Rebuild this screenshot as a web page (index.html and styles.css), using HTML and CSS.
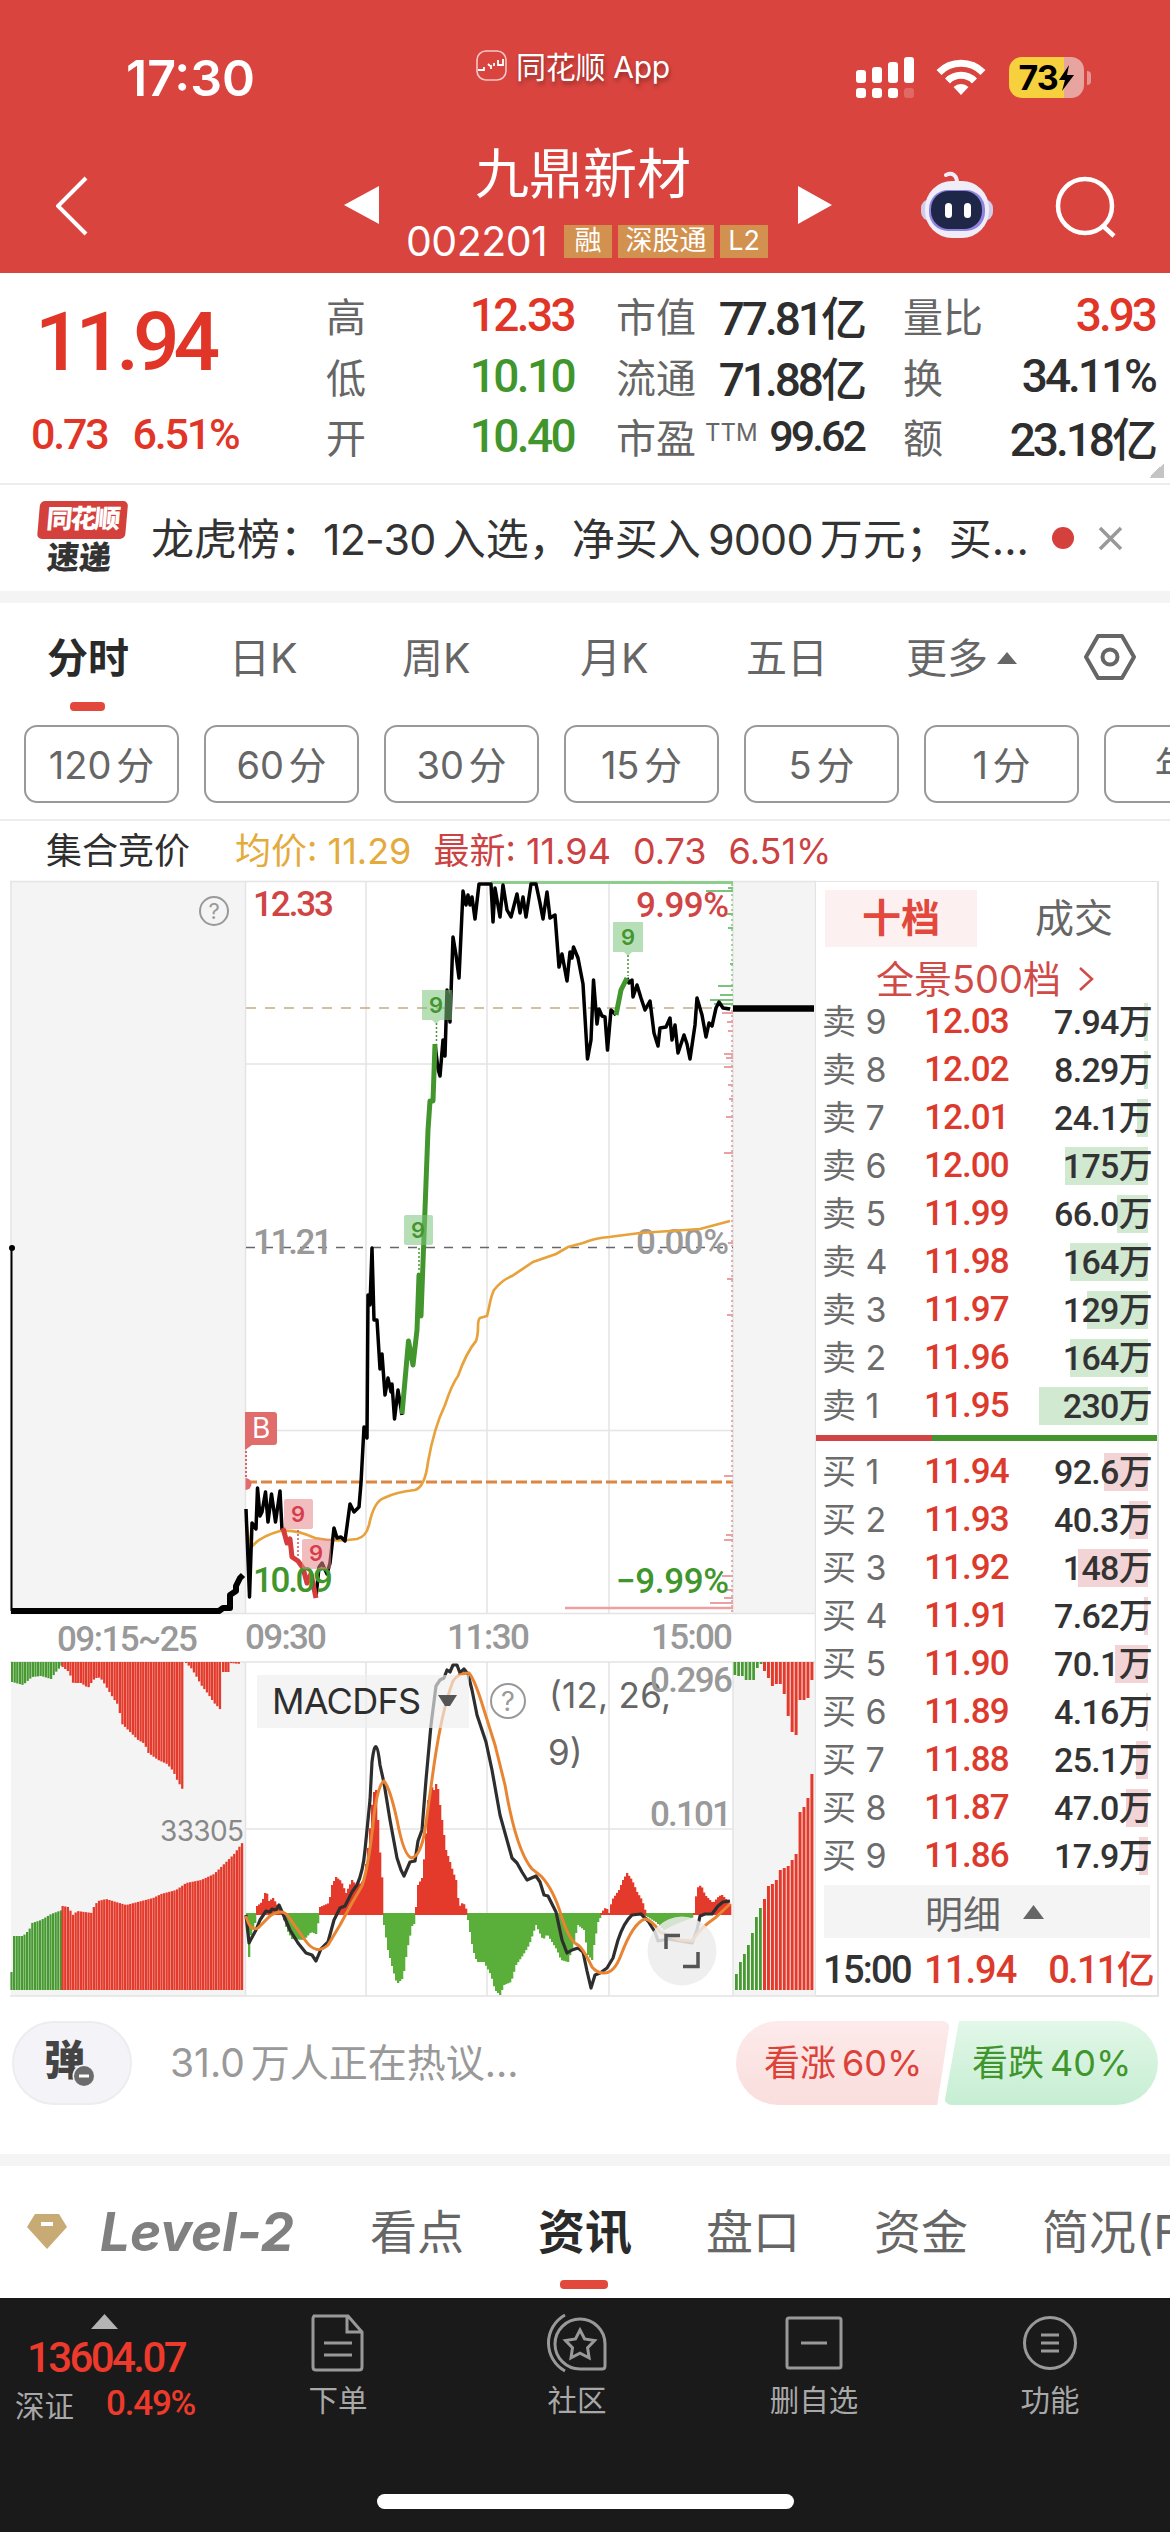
FILE: index.html
```html
<!DOCTYPE html>
<html lang="zh-CN">
  <head>
    <meta charset="utf-8" />
    <title>九鼎新材 002201</title>
    <link rel="stylesheet" href="styles.css">
  </head>
  <body>
    <div class="header">
      <div class="status">
        <div class="time">17:30</div>
        <div class="app-label">
          <svg width="31" height="31" viewBox="0 0 31 31" fill="none" stroke="#fff">
            <rect x="1" y="1" width="29" height="29" rx="9" stroke-width="1.6" opacity=".7" />
            <path d="M2 20h6v-3M12 14l2 2M15 19v-4M18 13v3M22 10v5h5V9" stroke-width="1.8" />
          </svg>
          <span>同花顺 App</span>
        </div>
        <svg class="signal" width="58" height="42" viewBox="0 0 58 42" fill="#fff">
          <rect x="0" y="13" width="10" height="13" rx="3" />
          <rect x="16" y="10" width="10" height="16" rx="3" />
          <rect x="32" y="5" width="10" height="21" rx="3" />
          <rect x="48" y="0" width="10" height="26" rx="3" />
          <rect x="0" y="31" width="10" height="10" rx="3" />
          <rect x="16" y="31" width="10" height="10" rx="3" />
          <rect x="32" y="31" width="10" height="10" rx="3" />
          <rect x="48" y="31" width="10" height="10" rx="3" opacity=".2" />
        </svg>
        <svg class="wifi" width="50" height="38" viewBox="0 0 50 38" fill="none" stroke="#fff" stroke-width="7">
          <path d="M3 14.500a31 31 0 0 1 44 0" />
          <path d="M11.500 23a19 19 0 0 1 27 0" />
          <path d="M25 37l-7.500-8a11 11 0 0 1 15 0z" fill="#fff" stroke="none" />
        </svg>
        <div class="battery">
          <div class="battery-body">73<svg width="17" height="28" viewBox="0 0 17 28"><path d="M11 1L1 16h6l-3 11L16 11h-7z" fill="#000" /></svg></div>
          <div class="battery-tip"></div>
        </div>
      </div>

      <div class="nav">
        <svg class="back" width="32" height="60" viewBox="0 0 32 60"><path d="M30 2L2 30l28 28" fill="none" stroke="#fff" stroke-width="4" /></svg>
        <svg class="prev" width="35" height="38" viewBox="0 0 35 38"><path d="M0 19L35 0v38z" fill="#fff" /></svg>
        <div class="stock">
          <div class="stock-name">九鼎新材</div>
          <div class="stock-code">
            <span class="code">002201</span>
            <span class="badge">融</span>
            <span class="badge wide">深股通</span>
            <span class="badge">L2</span>
          </div>
        </div>
        <svg class="next" width="34" height="38" viewBox="0 0 34 38"><path d="M34 19L0 0v38z" fill="#fff" /></svg>
        <svg class="robot" width="72" height="68" viewBox="0 0 72 68">
          <path d="M25 4c6-3 11 0 11 8" fill="none" stroke="#f0edf8" stroke-width="4" stroke-linecap="round" />
          <rect x="0" y="28" width="72" height="22" rx="9" fill="#cfcbe8" />
          <rect x="4" y="10" width="64" height="57" rx="27" fill="#eeedf8" />
          <rect x="8" y="19" width="56" height="41" rx="19" fill="#8f83e0" />
          <rect x="10" y="20" width="51" height="38" rx="18" fill="#1e2748" />
          <rect x="24" y="32" width="7" height="15" rx="3.500" fill="#fff" />
          <rect x="43" y="32" width="7" height="15" rx="3.500" fill="#fff" />
        </svg>
        <svg class="search" width="62" height="62" viewBox="0 0 62 62" fill="none" stroke="#fff" stroke-width="4.500">
          <circle cx="30" cy="30" r="27" />
          <path d="M47 49l12 11" />
        </svg>
      </div>
    </div>

    <div class="quote">
      <div class="price-box">
        <div class="price num">11.94</div>
        <div class="change num"><span>0.73</span><span>6.51%</span></div>
      </div>
      <div class="stats col-a">
        <div><span>高</span><b class="num red">12.33</b></div>
        <div><span>低</span><b class="num green">10.10</b></div>
        <div><span>开</span><b class="num green">10.40</b></div>
      </div>
      <div class="stats col-b">
        <div><span>市值</span><b class="num">77.81亿</b></div>
        <div><span>流通</span><b class="num">71.88亿</b></div>
        <div><span>市盈<sup>TTM</sup></span><b class="num small">99.62</b></div>
      </div>
      <div class="stats col-c">
        <div><span>量比</span><b class="num red">3.93</b></div>
        <div><span>换</span><b class="num">34.11%</b></div>
        <div><span>额</span><b class="num">23.18亿</b></div>
      </div>
      <div class="corner"></div>
    </div>

    <div class="news">
      <div class="news-logo">
        <div class="news-logo-top">同花顺</div>
        <div class="news-logo-bottom">速递</div>
      </div>
      <div class="news-text">龙虎榜：<i>12-30</i> 入选，净买入 <i>9000</i> 万元；买...</div>
      <div class="news-dot"></div>
      <svg width="25" height="25" viewBox="0 0 25 25"><path d="M2 2l21 21M23 2L2 23" stroke="#999" stroke-width="3.500" /></svg>
    </div>

    <div class="tabs">
      <div class="tab active">分时</div>
      <div class="tab">日K</div>
      <div class="tab">周K</div>
      <div class="tab">月K</div>
      <div class="tab">五日</div>
      <div class="tab more">更多<svg width="20" height="12" viewBox="0 0 20 12"><path d="M10 0l10 12H0z" fill="#666" /></svg></div>
      <svg class="gear" width="52" height="46" viewBox="0 0 52 46" fill="none" stroke="#666" stroke-width="4">
        <path d="M14 2h24l12 21-12 21H14L2 23z" stroke-linejoin="round" />
        <circle cx="26" cy="23" r="7.500" />
      </svg>
    </div>

    <div class="periods">
      <div class="period">120 分</div>
      <div class="period">60 分</div>
      <div class="period">30 分</div>
      <div class="period">15 分</div>
      <div class="period">5 分</div>
      <div class="period">1 分</div>
      <div class="period">年K</div>
    </div>

    <div class="summary">
      <span class="auction">集合竞价</span>
      <span class="avg">均价: 11.29</span>
      <span class="last">最新: 11.94</span>
      <span class="last">0.73</span>
      <span class="last">6.51%</span>
    </div>

    <div class="main">
      <svg class="chart" width="816" height="1120" viewBox="0 880 816 1120">
        <!-- panels and grid -->
        <g fill="#f4f4f4">
          <rect x="11" y="881" width="234" height="733" />
          <rect x="733" y="881" width="82" height="733" />
          <rect x="11" y="1662" width="234" height="334" />
          <rect x="733" y="1662" width="82" height="334" />
        </g>
        <path d="M10 881.500H816M245 1064H733M245 1430.500H733M10 1613.500H816M10 1662H816M245 1829H733M10 1996H816M245.500 881V1614M366 881V1614M487 881V1614M609 881V1614M733 881V1614M245.500 1662V1996M366 1662V1996M487 1662V1996M609 1662V1996M733 1662V1996M11 881V1614M815.500 881V1996" fill="none" stroke="#e4e4e4" stroke-width="1.500" />
        <path d="M491 882.500H733" stroke="#8fcd8f" stroke-width="3" />
        <path d="M565 1608H733" stroke="#eda0a2" stroke-width="2.500" />
        <path d="M246 1008H733" stroke="#c3ac84" stroke-width="1.500" stroke-dasharray="10 9" />
        <path d="M246 1247.500H733" stroke="#66666e" stroke-width="1.500" stroke-dasharray="9 9" />
        <path d="M246 1482H733" stroke="#dc8640" stroke-width="3" stroke-dasharray="11 4" />

        <!-- volume by price, right edge -->
        <path d="M732 884V1008" stroke="#9ed59e" stroke-width="2" stroke-dasharray="2 3" />
        <path d="M732 1010V1612" stroke="#e3adb0" stroke-width="2" stroke-dasharray="2 3" />
        <path d="M728 888h5M706 891h27M724 914h9M728 928h5M730 964h3M718 986h15M720 995h13M710 1000h23M714 1004h19" stroke="#7cc47c" stroke-width="2" />
        <path d="M722 1013h11M727 1022h6M728 1031h5M724 1054h9M726 1058h7M724 1067h9M728 1085h5M729 1099h4M726 1117h7M724 1153h9M728 1243h5M727 1279h6M727 1315h6M724 1476h9M726 1535h7M724 1540h9M722 1576h11M727 1590h6M724 1598h9M710 1603h23" stroke="#eba0a3" stroke-width="2" />

        <!-- call auction -->
        <path d="M11.500 1247V1611" stroke="#000" stroke-width="2" />
        <path d="M11 1611H219L223 1608H230V1595L236 1591V1586L240 1578L243 1575" fill="none" stroke="#000" stroke-width="6" stroke-linejoin="round" />
        <circle cx="12" cy="1248" r="3" />
        <path d="M733 1008.500H814" stroke="#000" stroke-width="6.500" />

        <!-- labels on the main chart -->
        <g class="axis-num">
          <text x="253" y="916" textLength="81" class="red">12.33</text>
          <text x="253" y="1254" textLength="80" class="grey">11.21</text>
          <text x="636" y="917" textLength="93" class="red">9.99%</text>
          <text x="636" y="1254" textLength="93" class="grey">0.00%</text>
        </g>

        <!-- average price -->
        <path d="M246 1520L250 1549Q258 1537 280 1531Q295 1529 315 1538Q335 1542 357 1539Q366 1537 369 1525Q374 1501 384 1498Q396 1492 415 1490Q425 1487 428 1462Q434 1428 445 1405Q452 1384 458 1376C464 1359 470 1348 476 1341C480 1330 476 1321 480 1318L487 1316C490 1305 490 1298 494 1290Q502 1280 512 1276L533 1262L556 1254L568 1247L583 1243Q595 1238 609 1237L640 1233L700 1229L715 1225L730 1221" fill="none" stroke="#e8a23c" stroke-width="2.700" />

        <!-- price -->
        <g fill="none" stroke="#000" stroke-width="3.500" stroke-linejoin="round">
          <path d="M246 1509L249.500 1597L252 1523L256 1529L257.500 1488L260 1516L262 1512L265.500 1492L268 1522L271.500 1494L275.500 1522L280 1491L282 1530M316 1597L319 1567L322 1563L327 1574L330 1563L334 1528L337 1538L341 1537L345 1541L350 1504L354 1512L359 1507L361 1483L364 1427L367 1438L368 1295L370 1305L372 1248L374 1320L377 1320L380 1369L382 1354L385 1395L388 1378L391 1392L392 1384L394.500 1419L398 1390L402 1415" />
          <path d="M435 1044L438 1069L440 1076L443 1040L445 1056L447 990L450 1022L453 937L456 955L459 978L463 891L466 905L468 895L470 905L472 897L475 919L479 884H491L493 922L495 888L500 917L503 885L507 910L511 917L517 894L520 913L523 897L526 917L531 884H536L540 903L543 919L547 892L550 918L555 915L559 967L562 954L567 981L570 952L572 958L573.500 947L578 958L583 984L587.500 1059L591 1040L593.500 980L597 1024L599 1009L602 1016L605 1017L607.500 1050L611 1010L616 1015M627 978L629 983L632 980L633 997L637 985L641 998L645 1010L650 1001L654 1033L658 1046L660 1028L666 1027L670 1018L672 1040L675 1025L678 1053L684 1035L687 1044L690 1059L695 1025L697 998L702 1015L706 1037L709 1023L712 1026L716 1008L719 1002L723 1008L730 1009" />
        </g>
        <path d="M402 1414L408.500 1341L413 1365L417 1330L419 1275L421 1316L424 1236L428 1130L430 1101L433 1101L435 1044M616 1015L621 990L627 978" fill="none" stroke="#43962e" stroke-width="5" stroke-linejoin="round" />
        <path d="M283 1528L287 1543L290 1539L292 1557L298 1561L303 1568L307 1583L311 1574L316 1598" fill="none" stroke="#d63c3c" stroke-width="5" stroke-linejoin="round" />

        <g class="axis-num">
          <text x="253" y="1592" textLength="80" class="green">10.09</text>
          <text x="616" y="1593" textLength="113" class="green">−9.99%</text>
        </g>

        <!-- signal tags -->
        <path d="M246 1447V1478" stroke="#dc6468" stroke-width="2" stroke-dasharray="2 2" />
        <path d="M247 1412h27q3 0 3 3v27q0 3-3 3h-22l-7 5v-38z" fill="#e06c6c" />
        <text x="252" y="1438" class="tag-b">B</text>
        <path d="M245.500 1478a6 6 0 0 1 0 12z" fill="#e06c6c" />
        <path d="M298 1530V1558" stroke="#d05060" stroke-width="1.500" stroke-dasharray="2 2" />
        <path d="M436.500 1023V1041M628 955V976M419 1248V1272" stroke="#43962e" stroke-width="1.500" stroke-dasharray="2 2" />
        <g fill="#e8868a" fill-opacity=".55">
          <rect x="284" y="1499" width="29" height="30" rx="2" />
          <rect x="302" y="1539" width="29" height="30" rx="2" />
        </g>
        <g fill="#7cc47c" fill-opacity=".55">
          <rect x="404" y="1215" width="29" height="30" rx="2" />
          <path d="M422 990h30v30h-12l-4 4-4-4h-10z" />
          <path d="M613 922h30v30h-11l-4 4-4-4h-11z" />
        </g>
        <g class="tag-9">
          <text x="298" y="1522" class="tag-red">9</text>
          <text x="316" y="1561" class="tag-red">9</text>
          <text x="418" y="1238">9</text>
          <text x="436" y="1013">9</text>
          <text x="628" y="945">9</text>
        </g>

        <g class="help">
          <circle cx="214" cy="911" r="14" />
          <text x="214" y="919" font-size="22">?</text>
        </g>

        <!-- time axis -->
        <g class="axis-num grey">
          <text x="57" y="1651" textLength="141">09:15~25</text>
          <text x="245" y="1649" textLength="82">09:30</text>
          <text x="447" y="1649" textLength="83">11:30</text>
          <text x="651" y="1649" textLength="82">15:00</text>
        </g>

        <!-- bars are filled in by chart.js -->
        <g id="bars"></g>
        <text x="160" y="1841" textLength="84" class="volume">33305</text>

        <!-- MACD lines -->
        <path d="M246 1915L249 1943L256 1930L260 1920L266 1911L270 1912L272 1909L276 1910L279 1905L283 1914L290 1930L298 1943L306 1953L312 1955L316 1961L321 1949L328 1942L334 1920L340 1908L345 1906L352 1892L357 1885Q363 1872 365 1850L368 1820L370 1800L372 1762Q376 1730 380 1765L384 1783L390 1820L397 1858L401 1870L404 1876L410 1862L415 1861L418 1841L422 1830L426 1780L431 1725L436 1686L440 1680L444 1678L447 1670L450 1672L453 1665H457L460 1673L464 1669L468 1674L472 1690L477 1715L486 1742L492 1770L500 1815L512 1858L517 1863L522 1872L527 1880L536 1876L540 1882L544 1895L548 1896L556 1912L562 1940L567 1953L572 1950L578 1948L583 1952L587 1971L591 1988L595 1975L600 1973L607 1968L613 1958L618 1940Q624 1922 632 1915L641 1914L648 1921L655 1932L658 1941L668 1939L680 1941L692 1943L697 1930L700 1916L705 1914H712L718 1906L723 1902L730 1901" fill="none" stroke="#2e2e2e" stroke-width="3.200" stroke-linejoin="round" />
        <path d="M246 1916Q250 1932 258 1928L270 1916Q282 1908 288 1916L295 1926L305 1940Q316 1956 328 1945L340 1925L352 1903L362 1886Q369 1865 374 1815Q378 1785 384 1781Q390 1788 397 1820Q404 1857 412 1858Q421 1855 425 1830L434 1765Q442 1710 453 1681Q458 1673 469 1673Q475 1680 484 1710L495 1745L505 1785Q516 1850 532 1869L541 1876Q554 1890 562 1918Q570 1942 578 1945Q583 1948 592 1967Q597 1973 603 1973Q614 1974 621 1955Q633 1923 645 1919Q652 1920 660 1932L680 1940L692 1941Q700 1928 715 1918L730 1904" fill="none" stroke="#e88432" stroke-width="3" />

        <rect x="257" y="1675" width="212" height="53" fill="#f0eeee" fill-opacity=".65" />
        <text x="272" y="1714" textLength="149" class="indicator">MACDFS</text>
        <path d="M438 1695h19l-7 11h-5z" fill="#555" />
        <g class="help">
          <circle cx="508" cy="1701" r="17" />
          <text x="508" y="1711" font-size="27">?</text>
        </g>
        <g class="params">
          <text x="549" y="1708" textLength="122">(12, 26,</text>
          <text x="548" y="1765">9)</text>
        </g>
        <g class="axis-num grey">
          <text x="650" y="1692" textLength="83">0.296</text>
          <text x="650" y="1826" textLength="82">0.101</text>
        </g>
        <circle cx="682" cy="1951" r="34.500" fill="#ececec" fill-opacity=".85" />
        <path d="M666 1949V1935.500H680M698 1952V1966.500H683" fill="none" stroke="#555" stroke-width="3.500" />
      </svg>

      <div class="book">
        <div class="book-tabs">
          <div class="book-tab on">十档</div>
          <div class="book-tab">成交</div>
        </div>
        <div class="panorama">全景500档<svg width="15" height="26" viewBox="0 0 15 26"><path d="M1 2l12 11L1 24" fill="none" stroke="#d04a48" stroke-width="2.500" /></svg></div>
        <div class="side sell">
          <div class="row"><span>卖 9</span><b>12.03</b><em style="--w: 4px">7.94万</em></div>
          <div class="row"><span>卖 8</span><b>12.02</b><em style="--w: 4px">8.29万</em></div>
          <div class="row"><span>卖 7</span><b>12.01</b><em style="--w: 11px">24.1万</em></div>
          <div class="row"><span>卖 6</span><b>12.00</b><em style="--w: 83px">175万</em></div>
          <div class="row"><span>卖 5</span><b>11.99</b><em style="--w: 31px">66.0万</em></div>
          <div class="row"><span>卖 4</span><b>11.98</b><em style="--w: 78px">164万</em></div>
          <div class="row"><span>卖 3</span><b>11.97</b><em style="--w: 61px">129万</em></div>
          <div class="row"><span>卖 2</span><b>11.96</b><em style="--w: 78px">164万</em></div>
          <div class="row"><span>卖 1</span><b>11.95</b><em style="--w: 109px">230万</em></div>
        </div>
        <div class="ratio"></div>
        <div class="side buy">
          <div class="row"><span>买 1</span><b>11.94</b><em style="--w: 44px">92.6万</em></div>
          <div class="row"><span>买 2</span><b>11.93</b><em style="--w: 19px">40.3万</em></div>
          <div class="row"><span>买 3</span><b>11.92</b><em style="--w: 70px">148万</em></div>
          <div class="row"><span>买 4</span><b>11.91</b><em style="--w: 4px">7.62万</em></div>
          <div class="row"><span>买 5</span><b>11.90</b><em style="--w: 33px">70.1万</em></div>
          <div class="row"><span>买 6</span><b>11.89</b><em style="--w: 2px">4.16万</em></div>
          <div class="row"><span>买 7</span><b>11.88</b><em style="--w: 12px">25.1万</em></div>
          <div class="row"><span>买 8</span><b>11.87</b><em style="--w: 22px">47.0万</em></div>
          <div class="row"><span>买 9</span><b>11.86</b><em style="--w: 9px">17.9万</em></div>
        </div>
        <div class="detail">明细<svg width="21" height="14" viewBox="0 0 21 14"><path d="M10.500 0L21 14H0z" fill="#666" /></svg></div>
        <div class="tick"><span>15:00</span><b>11.94</b><em>0.11亿</em></div>
      </div>
    </div>

    <div class="discuss">
      <div class="danmu">
        <span>弹</span>
        <svg class="danmu-off" width="24" height="24" viewBox="0 0 24 24"><circle cx="12" cy="12" r="11.500" fill="#f3f3f7" /><circle cx="12" cy="12" r="10" fill="#6c6c6c" /><path d="M7 12h10" stroke="#fff" stroke-width="3" /></svg>
      </div>
      <div class="hot">31.0 万人正在热议...</div>
      <div class="vote up">看涨<i>60%</i></div>
      <div class="vote down">看跌<i>40%</i></div>
    </div>

    <div class="sections">
      <svg class="gem" width="40" height="36" viewBox="0 0 40 36"><path d="M8 1h24l8 13-20 22L0 14z" fill="#c8ab74" /><path d="M14 11h12" stroke="#fff" stroke-width="4" /></svg>
      <div class="level2">Level-2</div>
      <div class="section">看点</div>
      <div class="section active">资讯</div>
      <div class="section">盘口</div>
      <div class="section">资金</div>
      <div class="section">简况(F10)</div>
    </div>

    <div class="bottom">
      <div class="index">
        <svg width="27" height="15" viewBox="0 0 27 15"><path d="M13.500 0L27 15H0z" fill="#b4b4b4" /></svg>
        <div class="index-value num">13604.07</div>
        <div class="index-row"><span>深证</span><b class="num">0.49%</b></div>
      </div>
      <div class="action order">
        <svg width="56" height="58" viewBox="0 0 56 58" fill="none" stroke="#999" stroke-width="3">
          <path d="M4 2h34l14 16v35q0 3-3 3H6q-3 0-3-3V4zM37 2v16h15M14 29h28M14 41h28" />
        </svg>
        <span>下单</span>
      </div>
      <div class="action community">
        <svg width="64" height="60" viewBox="0 0 64 60" fill="none" stroke="#999" stroke-width="3">
          <path d="M60 31a25 25 0 1 0-25 25h22q3 0 3-3z" />
          <path d="M20 2a32 32 0 0 0 0 56" />
          <path d="M35 17l4.600 9 10 1.600-7 7.200 1.500 10L35 40.200 26 44.800l1.500-10-7-7.200 10-1.600z" />
        </svg>
        <span>社区</span>
      </div>
      <div class="action remove">
        <svg width="58" height="54" viewBox="0 0 58 54" fill="none" stroke="#999" stroke-width="3">
          <rect x="2" y="2" width="54" height="50" rx="2" />
          <path d="M16 27h26" />
        </svg>
        <span>删自选</span>
      </div>
      <div class="action func">
        <svg width="56" height="56" viewBox="0 0 56 56" fill="none" stroke="#999" stroke-width="3">
          <circle cx="28" cy="28" r="25.500" />
          <path d="M19 20h18M19 28h18M19 36h18" />
        </svg>
        <span>功能</span>
      </div>
      <div class="home-bar"></div>
    </div>

    <script src="chart.js"></script>
  </body>
</html>
```
FILE: styles.css
```css
* {
  box-sizing: border-box;
}

body {
  width: 1170px;
  height: 2532px;
  margin: 0;
  overflow: hidden;
  font-family: Inter, 'Noto Sans CJK SC', sans-serif;
  background: #fff;
  color: #333;
}

svg {
  display: block;
  flex: none;
}

i,
em {
  font-style: normal;
}

.num {
  font-family: Roboto, 'Noto Sans CJK SC', sans-serif;
  font-weight: 500;
}

.red {
  color: #e13528;
  fill: #d04444;
}

.green {
  color: #40962c;
  fill: #40962c;
}

.grey {
  fill: #999;
}

/* header */

.header {
  height: 273px;
  background: #d9443f;
  color: #fff;
}

.status {
  display: flex;
  height: 130px;
  padding: 44px 0 0 126px;
}

.time {
  width: 350px;
  margin-top: 4px;
  font-size: 50px;
  line-height: 60px;
  font-weight: 600;
}

.app-label {
  display: flex;
  width: 380px;
  height: 42px;
  align-items: center;
  gap: 9px;
  font-size: 30px;
  letter-spacing: -0.3px;
  text-shadow: 1px 3px 4px rgba(0, 0, 0, 0.35);
}

.signal {
  margin-top: 13px;
}

.wifi {
  margin: 14px 0 0 22px;
}

.battery {
  display: flex;
  align-items: center;
  gap: 3px;
  height: 41px;
  margin: 13px 0 0 23px;
}

.battery-body {
  display: flex;
  align-items: center;
  justify-content: center;
  width: 75px;
  height: 41px;
  border-radius: 13px;
  background: linear-gradient(90deg, #f7d03d 73%, #e8a5a0 73%);
  color: #000;
  font-size: 34px;
  font-weight: 700;
  letter-spacing: -1px;
}

.battery-tip {
  width: 4px;
  height: 14px;
  border-radius: 0 4px 4px 0;
  background: #e39592;
}

.nav {
  display: flex;
  padding-left: 56px;
}

.back {
  margin-top: 46px;
}

.prev {
  margin: 56px 0 0 256px;
}

.stock {
  width: 419px;
  padding-left: 27px;
}

.stock-name {
  height: 80px;
  margin-top: 5px;
  padding-left: 69px;
  font-size: 54px;
  line-height: 80px;
}

.stock-code {
  display: flex;
  align-items: center;
  gap: 6px;
  height: 60px;
  margin-top: -4px;
}

.code {
  width: 152px;
  font-size: 41px;
  letter-spacing: -0.5px;
}

.badge {
  width: 48px;
  height: 33px;
  background: #d2914f;
  font-size: 27px;
  line-height: 32px;
  text-align: center;
}

.badge.wide {
  width: 96px;
}

.next {
  margin-top: 56px;
}

.robot {
  margin: 41px 0 0 89px;
}

.search {
  margin: 46px 0 0 62px;
}

/* quote */

.quote {
  position: relative;
  display: flex;
  height: 212px;
  border-bottom: 2px solid #ececec;
}

.price-box {
  width: 326px;
  padding-left: 31px;
  color: #e13528;
}

.price {
  margin-top: 23px;
  padding-left: 4px;
  font-size: 82px;
  line-height: 92px;
  letter-spacing: -6px;
}

.change {
  display: flex;
  gap: 25px;
  margin-top: 20px;
  font-size: 43px;
  line-height: 52px;
  letter-spacing: -2.2px;
}

.stats > div {
  display: flex;
  align-items: center;
  justify-content: space-between;
  height: 60.500px;
  font-size: 40px;
  color: #666;
}

.stats {
  padding-top: 12px;
}

.stats b {
  color: #2e2e2e;
  font-size: 46px;
  letter-spacing: -2.6px;
  margin-right: -1px;
}

.stats b.red {
  color: #e13528;
}

.stats b.green {
  color: #40962c;
}

.stats b.small {
  font-size: 43px;
  letter-spacing: -3px;
}

.stats sup {
  position: relative;
  top: -3px;
  margin-left: 9px;
  font-size: 24px;
  vertical-align: 9px;
  line-height: 0;
}

.col-a {
  width: 247px;
}

.col-b {
  width: 247px;
  margin-left: 43px;
}

.col-b b,
.col-c b {
  letter-spacing: -3px;
}

.col-c {
  width: 251px;
  margin-left: 40px;
}

.corner {
  position: absolute;
  right: 6px;
  bottom: 5px;
  width: 15px;
  height: 15px;
  background: linear-gradient(135deg, transparent 50%, #c4c4c4 50%);
}

/* news */

.news {
  display: flex;
  align-items: center;
  height: 118px;
  padding-left: 37px;
  border-bottom: 12px solid #f4f4f4;
}

.news-logo {
  width: 88px;
  transform: skewX(-5deg);
  text-align: center;
  font-weight: 900;
}

.news-logo-top {
  height: 38px;
  border-radius: 5px;
  background: #d4403c;
  color: #fff;
  font-size: 26px;
  line-height: 36px;
  letter-spacing: -2px;
}

.news-logo-bottom {
  height: 36px;
  font-size: 32px;
  line-height: 38px;
}

.news-text {
  width: 872px;
  margin: -5px 0 0 26px;
  font-size: 43px;
  white-space: nowrap;
  word-spacing: -5px;
}

.news-text i {
  letter-spacing: -0.8px;
}

.news-dot {
  width: 22px;
  height: 22px;
  margin: 0 24px 0 29px;
  border-radius: 50%;
  background: #d4403c;
}

/* chart tabs */

.tabs {
  display: flex;
  height: 122px;
  padding-left: 47px;
  font-size: 41px;
  line-height: 110px;
  color: #666;
}

.tab {
  flex: none;
  width: 174px;
}

.tab:nth-child(1) {
  width: 182px;
}

.tab:nth-child(2) {
  width: 173px;
}

.tab:nth-child(3) {
  width: 178px;
}

.tab:nth-child(4) {
  width: 166px;
}

.tab:nth-child(5) {
  width: 160px;
}

.tab.more {
  display: flex;
  align-items: center;
  gap: 9px;
  height: 110px;
  width: 178px;
}

.tab.active {
  color: #2a2a2a;
  font-weight: 700;
}

.tab.active::after {
  content: '';
  display: block;
  width: 35px;
  height: 9px;
  margin: -11px 0 0 23px;
  border-radius: 4px;
  background: #e2483c;
}

.gear {
  margin-top: 31px;
}

.periods {
  display: flex;
  gap: 25px;
  height: 96px;
  padding-left: 24px;
  border-bottom: 2px solid #ececec;
  overflow: hidden;
}

.period {
  flex: none;
  width: 155px;
  height: 78px;
  border: 2px solid #999;
  border-radius: 13px;
  color: #666;
  font-size: 38px;
  line-height: 76px;
  text-align: center;
  word-spacing: -6px;
}

.period:last-child {
  padding-left: 10px;
}

.summary {
  display: flex;
  height: 59px;
  padding-left: 46px;
  gap: 22px;
  font-size: 36px;
  line-height: 60px;
  white-space: nowrap;
}

.auction {
  width: 167px;
  color: #2e2e2e;
}

.avg {
  color: #e3ab3c;
}

.last {
  color: #cc4242;
}

/* chart and order book */

.main {
  display: flex;
  height: 1120px;
}

.axis-num {
  font-family: Roboto, sans-serif;
  font-weight: 500;
  font-size: 35px;
}

.tag-b {
  fill: #fff;
  font-size: 28px;
}

.tag-9 {
  fill: #43962e;
  font-size: 22px;
  font-weight: 600;
  text-anchor: middle;
}

.tag-red {
  fill: #d63c4a;
}

.help circle {
  fill: none;
  stroke: #999;
  stroke-width: 2;
}

.help text {
  fill: #999;
  text-anchor: middle;
}

.volume {
  fill: #888;
  font-size: 28px;
}

.indicator {
  fill: #2e2e2e;
  font-size: 36px;
}

.params {
  fill: #666;
  font-size: 35px;
}

.book {
  width: 343px;
  height: 1116px;
  margin-top: 1px;
  border: solid #e4e4e4;
  border-width: 1px 2px 2px 0;
}

.book-tabs {
  display: flex;
  padding: 8px 0 0 9px;
}

.book-tab {
  width: 152px;
  height: 57px;
  margin-right: 20px;
  color: #666;
  font-size: 39px;
  line-height: 56px;
  text-align: center;
}

.book-tab:last-child {
  width: 154px;
  margin-right: 0;
}

.book-tab.on {
  background: #fdf0f0;
  color: #e2483c;
  font-weight: 700;
}

.panorama {
  display: flex;
  align-items: center;
  gap: 18px;
  height: 50px;
  padding: 14px 0 0 60px;
  color: #d04a48;
  font-size: 38px;
  line-height: 50px;
  white-space: nowrap;
}

.side {
  padding: 1px 0 0 6px;
}

.row,
.tick {
  display: flex;
  align-items: center;
  height: 48px;
  line-height: 38px;
}

.row span {
  width: 102px;
  color: #6c6c6c;
  font-size: 34px;
}

.row b,
.tick b {
  width: 84px;
  color: #dd3a2e;
  font: 500 35px/38px Roboto, sans-serif;
  letter-spacing: -0.9px;
}

.row em {
  width: 144px;
  height: 38px;
  text-align: right;
  background: linear-gradient(var(--c), var(--c)) right 4px top / var(--w) 100% no-repeat;
  font: 500 34px/38px Roboto, 'Noto Sans CJK SC', sans-serif;
  letter-spacing: -0.7px;
}

.sell {
  --c: #d1e8d1;
}

.buy {
  --c: #f2d4d7;
  padding-top: 7px;
}

.ratio {
  height: 6px;
  margin-top: 5px;
  background: linear-gradient(90deg, #d04444 34%, #43962e 34%);
}

.detail {
  display: flex;
  align-items: center;
  justify-content: center;
  gap: 22px;
  width: 326px;
  height: 53px;
  margin: 5px 0 0 8px;
  padding-right: 5px;
  background: #f4f4f4;
  color: #666;
  font-size: 38px;
}

.tick {
  height: 58px;
  padding: 5px 0 0 7px;
  font: 500 38px/38px Roboto, 'Noto Sans CJK SC', sans-serif;
  letter-spacing: -1.7px;
}

.tick span {
  width: 101px;
}

.tick b {
  width: 90px;
  font-size: 38px;
}

.tick em {
  width: 139px;
  color: #dd3a2e;
  text-align: right;
}

/* discussion */

.discuss {
  display: flex;
  height: 166px;
  padding: 21px 12px 0;
  border-bottom: 12px solid #f4f4f4;
}

.danmu {
  position: relative;
  width: 120px;
  height: 84px;
  border: 2px solid #ececf1;
  border-radius: 42px;
  background: #f4f4f8;
}

.danmu span {
  display: block;
  padding-left: 30px;
  color: #444;
  font-size: 41px;
  line-height: 74px;
  font-weight: 900;
}

.danmu-off {
  position: absolute;
  left: 58px;
  top: 41px;
}

.hot {
  width: 566px;
  margin-left: 38px;
  color: #999;
  font-size: 39px;
  line-height: 84px;
  word-spacing: -5px;
}

.vote {
  width: 214px;
  height: 84px;
  font-size: 36px;
  line-height: 84px;
}

.vote i {
  margin-left: 6px;
}

.vote.up {
  padding-left: 28px;
  border-radius: 42px 8px 8px 42px;
  background: linear-gradient(#fdeaea, #f9dedd);
  color: #dc4238;
  clip-path: polygon(0 0, 100% 0, 94% 100%, 0 100%);
}

.vote.down {
  margin-left: -6px;
  padding-left: 28px;
  border-radius: 8px 42px 42px 8px;
  background: linear-gradient(#e2f7e8, #c6eed3);
  color: #40962c;
  clip-path: polygon(7% 0, 100% 0, 100% 100%, 0 100%);
}

/* section tabs */

.sections {
  display: flex;
  height: 132px;
  padding-left: 27px;
  overflow: hidden;
  color: #666;
  font-size: 47px;
  line-height: 132px;
  white-space: nowrap;
}

.gem {
  margin-top: 47px;
}

.level2 {
  flex: none;
  width: 270px;
  margin-left: 33px;
  color: #808080;
  font-size: 53px;
  font-style: italic;
  font-weight: 700;
}

.section {
  flex: none;
  width: 168px;
}

.section.active {
  color: #2a2a2a;
  font-weight: 700;
}

.section.active::after {
  content: '';
  display: block;
  width: 48px;
  height: 9px;
  margin: -18px 0 0 22px;
  border-radius: 4px;
  background: #e2483c;
}

/* bottom bar */

.bottom {
  position: relative;
  display: flex;
  height: 235px;
  background: #1a1a1a;
  color: #a8a8a8;
  font-size: 29.500px;
}

.index {
  width: 231px;
  padding: 16px 0 0 15px;
}

.index svg {
  margin-left: 76px;
}

.index-value {
  margin: 4px 0 0 12px;
  color: #ee3a2c;
  font-size: 42px;
  line-height: 50px;
  letter-spacing: -2.6px;
}

.index-row {
  display: flex;
  gap: 32px;
  line-height: 46px;
}

.index-row b {
  color: #ee3a2c;
  font-size: 35px;
  line-height: 42px;
  letter-spacing: -1.2px;
}

.action {
  display: flex;
  flex-direction: column;
  align-items: center;
  width: 214px;
  padding-top: 15px;
}

.action svg {
  height: 60px;
}

.action span {
  margin-top: 6px;
  line-height: 42px;
}

.community {
  width: 264px;
}

.remove {
  width: 210px;
}

.func {
  margin-left: 24px;
}

.home-bar {
  position: absolute;
  left: 377px;
  bottom: 24px;
  width: 417px;
  height: 15px;
  border-radius: 8px;
  background: #fff;
}
```
FILE: chart.js
```js
const RED = '#e43a2b';
const GREEN = '#469a30';
const LIGHT_GREEN = '#5aae3a';
const layer = document.getElementById('bars');

function bar(x, y1, y2, width, color) {
  const rect = document.createElementNS('http://www.w3.org/2000/svg', 'rect');
  rect.setAttribute('x', x);
  rect.setAttribute('y', Math.min(y1, y2));
  rect.setAttribute('width', width);
  rect.setAttribute('height', Math.abs(y2 - y1));
  rect.setAttribute('fill', color);
  layer.appendChild(rect);
}

// points: flat list of x, y pairs, linear in between
function valueAt(points, x) {
  for (let i = 0; i < points.length - 2; i += 2) {
    if (x <= points[i + 2]) {
      const t = Math.max(0, (x - points[i]) / (points[i + 2] - points[i]));
      return points[i + 1] + t * (points[i + 3] - points[i + 1]);
    }
  }
  return points[points.length - 1];
}

function series(points, base, step, width, color) {
  for (let x = points[0]; x < points[points.length - 2]; x += step) {
    bar(x, base, valueAt(points, x), width, color);
  }
}

// call auction, unmatched volume (top) and matched volume (bottom)
series([11, 1682, 22, 1685, 31, 1677, 40, 1676, 50, 1679, 54, 1673, 61, 1665], 1662, 2.6, 2.2, GREEN);
series([61.5, 1667, 68, 1672, 72, 1683, 80, 1683, 87, 1688, 92, 1680, 97, 1677, 101, 1680, 112, 1698, 117, 1705,
  121, 1724, 137, 1740, 144, 1744, 146, 1752, 157, 1760, 166, 1764, 172, 1771, 176, 1780, 183, 1792], 1662, 2.6, 2.3, RED);
series([185, 1663, 190, 1668, 195, 1676, 200, 1685, 207, 1694, 213, 1703, 218, 1708, 221, 1712], 1662, 2.6, 2.3, RED);
series([222, 1672, 228, 1672, 229, 1663, 240, 1664], 1662, 2.6, 2.3, RED);

series([10.4, 1972, 12.5, 1936, 22, 1936, 28, 1930, 31, 1923, 40, 1920, 50, 1914, 61, 1910], 1990, 2.6, 2.2, GREEN);
series([61.5, 1906, 67, 1907, 72, 1915, 76, 1911, 91, 1913, 93, 1906, 97, 1901, 105, 1899, 125, 1905, 152, 1898,
  160, 1894, 175, 1890, 185, 1883, 200, 1880, 213, 1874, 225, 1862, 233, 1854, 241, 1843], 1990, 2.6, 2.3, RED);

// closing auction
[1675, 1676, 1676, 1680, 1680, 1680, 1668, 1664].forEach((y, i) => bar(733.5 + i * 3.75, 1662, y, 2.7, GREEN));
[1671, 1678, 1686, 1684, 1684, 1694, 1716, 1732, 1735, 1700, 1700, 1698, 1680]
  .forEach((y, i) => bar(763 + i * 3.95, 1662, y, 3, RED));
[1974, 1962, 1954, 1945, 1933, 1917, 1908].forEach((y, i) => bar(735 + i * 4, 1990, y, 2.8, GREEN));
[1899, 1886, 1884, 1880, 1870, 1868, 1866, 1860, 1854, 1812, 1807, 1798, 1774]
  .forEach((y, i) => bar(763 + i * 3.95, 1990, y, 3, RED));

// MACD histogram
const up = [
  [256, 1906, 261, 1902, 265, 1890, 268, 1901, 272, 1898, 281, 1913],
  [319, 1907, 328, 1903, 331, 1885, 335, 1877, 340, 1881, 345, 1893, 351, 1880, 356, 1886, 363, 1880, 368, 1840,
    372, 1793, 375, 1790, 378, 1835, 380, 1870, 383, 1892],
  [415, 1907, 417, 1885, 421, 1878, 424, 1850, 427, 1800, 430, 1786, 433, 1790, 436, 1781, 439, 1805, 445, 1850,
    449, 1862, 452, 1872, 455, 1880, 458, 1907, 462, 1902, 467, 1913],
  [600, 1913, 605, 1907, 608, 1913, 611, 1900, 618, 1890, 622, 1880, 626, 1873, 631, 1880, 636, 1892, 641, 1900, 645, 1913],
  [693, 1913, 696, 1888, 700, 1885, 704, 1895, 712, 1903, 718, 1896, 721, 1895, 726, 1900, 730, 1905],
];
const down = [
  [246, 1930, 248, 1957, 250, 1935, 255, 1920],
  [281, 1914, 286, 1930, 291, 1939, 303, 1940, 310, 1932, 315, 1934, 318, 1918],
  [383, 1925, 387, 1950, 392, 1970, 396, 1984, 402, 1978, 406, 1950, 411, 1926, 415, 1922],
  [467, 1920, 472, 1950, 476, 1962, 483, 1962, 490, 1975, 494, 1990, 499, 1995, 503, 1985, 510, 1982, 515, 1965,
    522, 1955, 528, 1945, 535, 1925, 542, 1940, 546, 1934, 556, 1950, 560, 1960, 567, 1962, 572, 1945, 577, 1925,
    583, 1930, 587, 1955, 591, 1960, 593, 1945, 597, 1922, 600, 1916],
  [645, 1916, 655, 1922, 663, 1930, 675, 1924, 693, 1917],
];
down.forEach((points) => series(points, 1913, 2, 2.3, LIGHT_GREEN));
up.forEach((points) => series(points, 1915, 2, 2.3, RED));
```
